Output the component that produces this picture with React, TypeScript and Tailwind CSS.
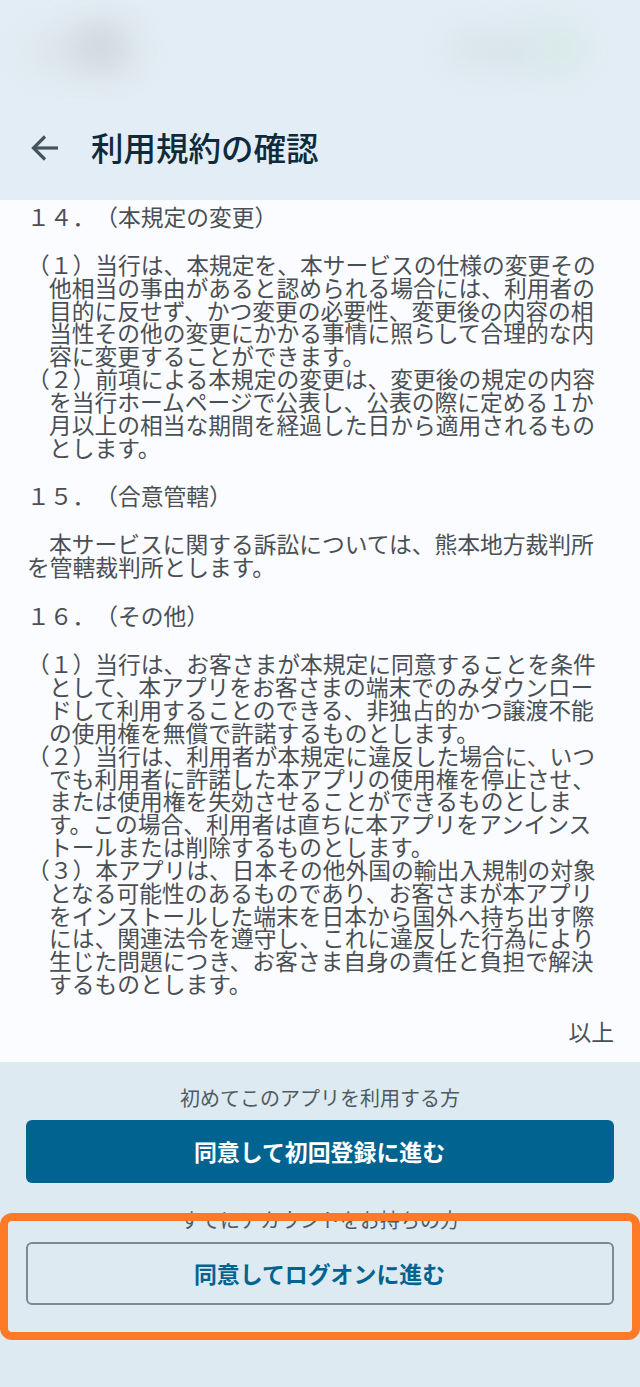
const FONT = "font-['Noto_Sans_CJK_JP','Noto_Sans',sans-serif]";

// Hanging-indent clause: first line starts at the bracket, the rest sit one char in.
function Clause({ lines }: { lines: string[] }) {
  return (
    <div>
      {lines.map((line, i) => (
        <div key={i} className={i === 0 ? "h-[22.85px] whitespace-nowrap" : "h-[22.85px] whitespace-nowrap pl-[22px]"}>
          {line}
        </div>
      ))}
    </div>
  );
}

function Heading({ children }: { children: string }) {
  return <div className="h-[22.85px] whitespace-nowrap">{children}</div>;
}

export default function App() {
  return (
    <div className={`relative flex h-[1387px] w-[640px] flex-col overflow-hidden bg-[#ddeaf2] [text-spacing-trim:space-all] ${FONT}`}>
      {/* Header with the blurred status bar */}
      <header className="relative h-[200px] shrink-0 overflow-hidden bg-[#e3edf5]">
        <div className="absolute left-[25px] top-[35px] h-[35px] w-[115px] rounded-full bg-[#dce5eb] blur-lg" />
        <div className="absolute left-[72px] top-[22px] h-[48px] w-[55px] rounded-full bg-[#cfd8de] blur-lg" />
        <div className="absolute left-[450px] top-[35px] h-[30px] w-[90px] rounded-full bg-[#d6e1e8] blur-lg" />
        <div className="absolute left-[530px] top-[28px] h-[42px] w-[55px] rounded-full bg-[#d6e9e4] blur-lg" />
        <div className="flex h-full items-end pb-[26px] pl-[26px]">
          <svg width="36" height="36" viewBox="0 0 36 36" fill="none" stroke="#46525c" strokeWidth="3.2" className="mb-[8px] shrink-0">
            <path d="M32 18H8" />
            <path d="M19 6.500 7.500 18 19 29.500" />
          </svg>
          <h1 className="mb-[2px] ml-[29px] text-[32.5px] leading-[50px] font-medium whitespace-nowrap text-[#0f2a3a]">利用規約の確認</h1>
        </div>
      </header>

      {/* Terms text */}
      <main className="h-[862px] shrink-0 overflow-hidden bg-[#fbfcff] pt-[5px] pl-[27px] pr-[26px] text-[22.75px] leading-[23px] text-[#4a4f54]">
        <Heading>１４．（本規定の変更）</Heading>
        <div className="mt-[25px]">
          <Clause
            lines={[
              "（１）当行は、本規定を、本サービスの仕様の変更その",
              "他相当の事由があると認められる場合には、利用者の",
              "目的に反せず、かつ変更の必要性、変更後の内容の相",
              "当性その他の変更にかかる事情に照らして合理的な内",
              "容に変更することができます。",
            ]}
          />
          <Clause
            lines={[
              "（２）前項による本規定の変更は、変更後の規定の内容",
              "を当行ホームページで公表し、公表の際に定める１か",
              "月以上の相当な期間を経過した日から適用されるもの",
              "とします。",
            ]}
          />
        </div>
        <div className="mt-[26px]">
          <Heading>１５．（合意管轄）</Heading>
        </div>
        <div className="mt-[25px]">
          <div className="h-[22.85px] whitespace-nowrap pl-[22px]">本サービスに関する訴訟については、熊本地方裁判所</div>
          <div className="h-[22.85px] whitespace-nowrap">を管轄裁判所とします。</div>
        </div>
        <div className="mt-[26px]">
          <Heading>１６．（その他）</Heading>
        </div>
        <div className="mt-[25.500px]">
          <Clause
            lines={[
              "（１）当行は、お客さまが本規定に同意することを条件",
              "として、本アプリをお客さまの端末でのみダウンロー",
              "ドして利用することのできる、非独占的かつ譲渡不能",
              "の使用権を無償で許諾するものとします。",
            ]}
          />
          <Clause
            lines={[
              "（２）当行は、利用者が本規定に違反した場合に、いつ",
              "でも利用者に許諾した本アプリの使用権を停止させ、",
              "または使用権を失効させることができるものとしま",
              "す。この場合、利用者は直ちに本アプリをアンインス",
              "トールまたは削除するものとします。",
            ]}
          />
          <Clause
            lines={[
              "（３）本アプリは、日本その他外国の輸出入規制の対象",
              "となる可能性のあるものであり、お客さまが本アプリ",
              "をインストールした端末を日本から国外へ持ち出す際",
              "には、関連法令を遵守し、これに違反した行為により",
              "生じた問題につき、お客さま自身の責任と負担で解決",
              "するものとします。",
            ]}
          />
        </div>
        <div className="mt-[25px] text-right">以上</div>
      </main>

      {/* Consent actions */}
      <footer className="flex flex-col items-center px-[26px] pt-[24px] text-[#4f5a62]">
        <p className="h-[24px] text-[20px] leading-[24px] whitespace-nowrap">初めてこのアプリを利用する方</p>
        <button className="mt-[10px] h-[63px] w-full rounded-md bg-[#016390] pr-[1px] text-[22.9px] font-bold text-white">
          同意して初回登録に進む
        </button>
        <p className="mt-[25px] h-[24px] text-[20px] leading-[24px] whitespace-nowrap">すでにアカウントをお持ちの方</p>
        <button className="mt-[10px] h-[63px] w-full rounded-md border-2 border-[#7b8a94] pr-[1px] text-[22.9px] font-bold text-[#016390]">
          同意してログオンに進む
        </button>
      </footer>

      {/* Orange highlight drawn over the screenshot */}
      <div className="pointer-events-none absolute left-0 top-[1213px] h-[127px] w-[640px] rounded-[12px] border-[8px] border-[#ff7a26]" />
    </div>
  );
}
